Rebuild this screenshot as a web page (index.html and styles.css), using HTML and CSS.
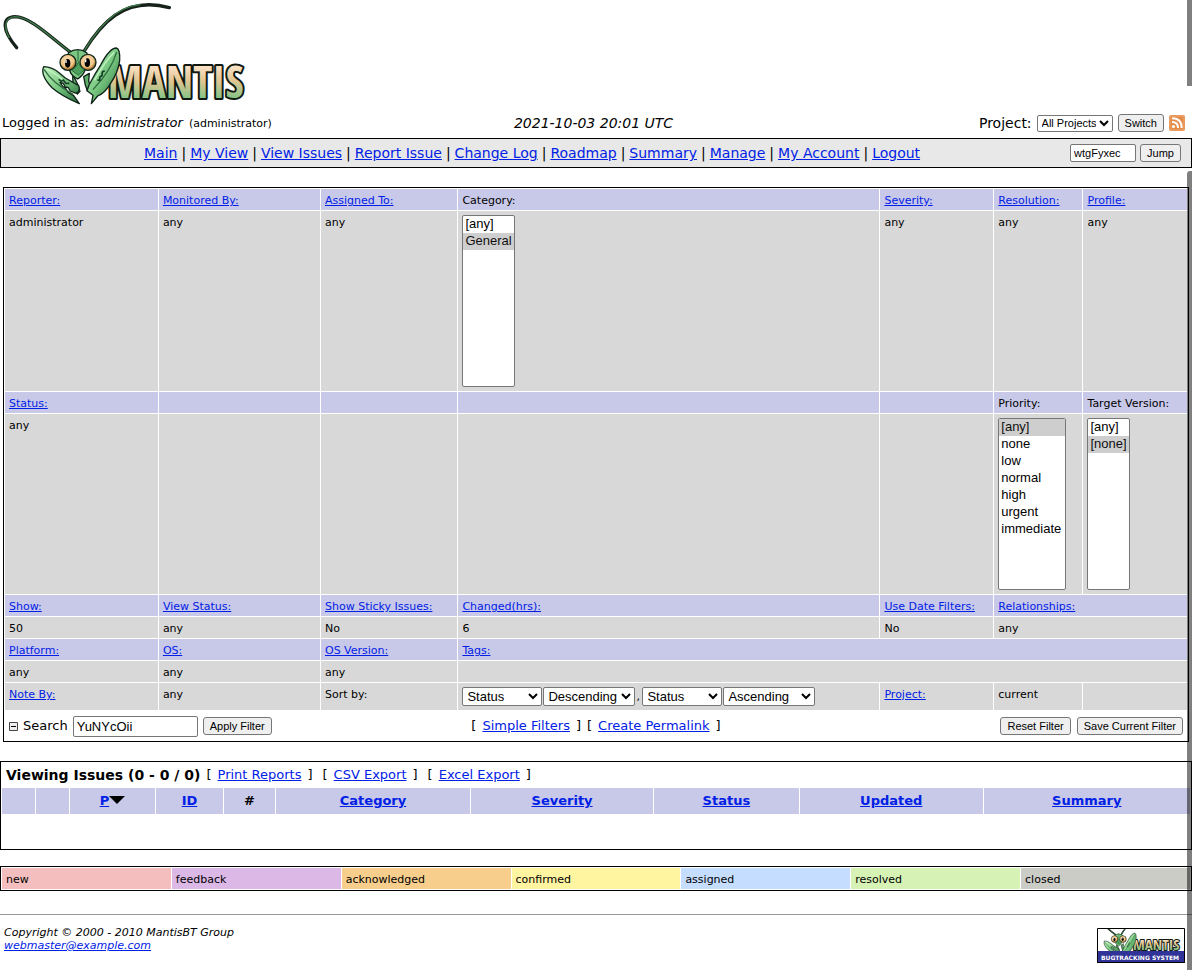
FILE: index.html
```html
<!DOCTYPE html>
<html lang="en">
<head>
<meta charset="utf-8">
<title>View Issues - MantisBT</title>
<link rel="stylesheet" href="styles.css">
</head>
<body>
<header>
<svg class="logo" viewBox="0 0 780 330" role="img" aria-label="Mantis">
  <defs>
    <linearGradient id="word" x1="0" y1="0" x2="0" y2="1"><stop offset="0.25" stop-color="#fbe3c8"/><stop offset="0.5" stop-color="#e2c592"/><stop offset="0.8" stop-color="#83c486"/></linearGradient>
    <linearGradient id="leaf" x1="0" y1="0" x2="1" y2="1"><stop offset="0" stop-color="#c4f5c2"/><stop offset="0.5" stop-color="#78c780"/><stop offset="1" stop-color="#23683a"/></linearGradient>
    <radialGradient id="eye" cx="0.45" cy="0.4"><stop offset="0" stop-color="#fae0b0"/><stop offset="0.8" stop-color="#efc488"/><stop offset="1" stop-color="#b9843e"/></radialGradient>
    <symbol id="mantis" viewBox="0 0 780 330">
      <g fill="none" stroke-linecap="round">
        <path d="M212 157C150 110 90 50 45 50C5 52 5 90 50 143" stroke="#152119" stroke-width="10"/>
        <path d="M212 157C150 110 90 50 45 50C15 52 10 80 27 112" stroke="#3f7b4b" stroke-width="4"/>
        <path d="M252 154C298 78 370 -15 508 23" stroke="#152119" stroke-width="10"/>
        <path d="M252 154C292 88 345 20 420 14" stroke="#3f7b4b" stroke-width="4"/>
      </g>
      <g stroke="#10251a" stroke-width="4" stroke-linejoin="round">
        <path d="M222 230L234 255L240 274L232 282L220 262L218 230ZM251 230L268 220L266 244L277 274L262 272L256 255Z" fill="#5fae69"/>
        <path d="M131 200Q157 201 178 219L196 234L236 257Q242 272 229 280L211 273L205 263L196 261L190 250L180 247L188 259L198 267L205 277L221 287L238 311Q185 288 156 263Q120 225 131 200Z" fill="url(#leaf)"/>
        <path d="M349 144Q361 147 359 182Q354 218 333 248Q316 279 293 288L274 311L279 286L261 272L267 255Q283 224 303 193Q329 144 349 144Z" fill="url(#leaf)"/>
        <path d="M205 159Q233 139 261 159L255 211Q250 226 233 237Q214 227 209 212Z" fill="#7cc782"/>
        <ellipse cx="204" cy="187" rx="24" ry="24" fill="url(#eye)"/>
        <ellipse cx="264" cy="187" rx="24" ry="24" fill="url(#eye)"/>
      </g>
      <path d="M132 208Q158 250 220 283M350 156Q335 209 279 269" fill="none" stroke="#326f40" stroke-width="4"/>
      <path d="M139 207Q170 221 204 253M343 157Q314 185 283 241" fill="none" stroke="#c4f5c2" stroke-width="4"/>
      <path d="M234 151V186M216 211Q230 201 235 187Q241 204 253 209L235 226Z" fill="#4f9f5c" stroke="#286b3b" stroke-width="3"/>
      <path d="M176 238L184 244L190 240L198 250L208 250M292 240L299 241L300 230L306 227L307 216L314 212" fill="none" stroke="#153c25" stroke-width="5"/>
      <ellipse cx="203" cy="190" rx="8" ry="13"/><ellipse cx="262" cy="188" rx="8" ry="13"/>
      <path d="M198 180v9M257 178v9" stroke="#fff" stroke-width="4"/>
    </symbol>
  </defs>
  <text class="wordmark" x="323" y="293">MANTIS</text>
  <use href="#mantis" width="780" height="330"/>
</svg>
<div class="login">
  <div class="who"><span>Logged in as:</span><i>administrator</i><small>(administrator)</small></div>
  <i>2021-10-03 20:01 UTC</i>
  <form class="switcher"><label for="project">Project:</label>
    <select id="project"><option>All Projects</option></select>
    <button type="button">Switch</button>
    <a class="rss" href="#" aria-label="RSS"><svg viewBox="0 0 16 16"><rect width="16" height="16" rx="2" fill="#e58b48"/><rect x="1" y="1" width="14" height="14" rx="1" fill="none" stroke="#efad78"/><circle cx="4.5" cy="11.5" r="1.6" fill="#fff"/><path d="M3 7Q9 7 9 13M3 3.3Q12.7 3.3 12.7 13" fill="none" stroke="#fff" stroke-width="2"/></svg></a>
  </form>
</div>
</header>
<div class="menubar">
  <nav><a href="#">Main</a><span>|</span><a href="#">My View</a><span>|</span><a href="#">View Issues</a><span>|</span><a href="#">Report Issue</a><span>|</span><a href="#">Change Log</a><span>|</span><a href="#">Roadmap</a><span>|</span><a href="#">Summary</a><span>|</span><a href="#">Manage</a><span>|</span><a href="#">My Account</a><span>|</span><a href="#">Logout</a></nav>
  <form><input class="jump" type="text" value="wtgFyxec" aria-label="Issue number"><button type="button">Jump</button></form>
</div>
<main>
<form class="filter">
<table>
<colgroup><col class="c1"><col class="c2"><col class="c3"><col class="c4"><col class="c5"><col class="c6"><col class="c7"></colgroup>
<tr class="head"><td><a href="#">Reporter:</a></td><td><a href="#">Monitored By:</a></td><td><a href="#">Assigned To:</a></td><td><label for="category">Category:</label></td><td><a href="#">Severity:</a></td><td><a href="#">Resolution:</a></td><td><a href="#">Profile:</a></td></tr>
<tr><td>administrator</td><td>any</td><td>any</td><td class="list"><select id="category" multiple size="10"><option>[any]</option><option selected>General</option></select></td><td>any</td><td>any</td><td>any</td></tr>
<tr class="head"><td><a href="#">Status:</a></td><td></td><td></td><td></td><td></td><td><label for="priority">Priority:</label></td><td><label for="target">Target Version:</label></td></tr>
<tr><td>any</td><td></td><td></td><td></td><td></td><td class="list"><select id="priority" multiple size="10"><option selected>[any]</option><option>none</option><option>low</option><option>normal</option><option>high</option><option>urgent</option><option>immediate</option></select></td><td class="list"><select id="target" multiple size="10"><option>[any]</option><option selected>[none]</option></select></td></tr>
<tr class="head"><td><a href="#">Show:</a></td><td><a href="#">View Status:</a></td><td><a href="#">Show Sticky Issues:</a></td><td><a href="#">Changed(hrs):</a></td><td><a href="#">Use Date Filters:</a></td><td colspan="2"><a href="#">Relationships:</a></td></tr>
<tr><td>50</td><td>any</td><td>No</td><td>6</td><td>No</td><td colspan="2">any</td></tr>
<tr class="head"><td><a href="#">Platform:</a></td><td><a href="#">OS:</a></td><td><a href="#">OS Version:</a></td><td colspan="4"><a href="#">Tags:</a></td></tr>
<tr><td>any</td><td>any</td><td>any</td><td colspan="4"></td></tr>
<tr><td><a href="#">Note By:</a></td><td>any</td><td>Sort by:</td><td class="list"><div class="sort"><select class="field" aria-label="First sort field"><option>Status</option></select><select class="dir" aria-label="First sort direction"><option>Descending</option></select><span>,</span><select class="field" aria-label="Second sort field"><option>Status</option></select><select class="dir" aria-label="Second sort direction"><option>Ascending</option></select></div></td><td><a href="#">Project:</a></td><td>current</td><td></td></tr>
</table>
<div class="actions">
  <div class="search"><svg class="collapse" viewBox="0 0 9 9"><path d="M.5 .5h8v8h-8z" fill="#eee" stroke="#444"/><path d="M2 4.5h5" stroke="#000"/></svg><label for="search">Search</label><input id="search" type="text" value="YuNYcOii"><button type="button">Apply Filter</button></div>
  <div class="links"><span>[</span><a href="#">Simple Filters</a><span>]</span><span>[</span><a href="#">Create Permalink</a><span>]</span></div>
  <div class="saves"><button type="button">Reset Filter</button><button type="button">Save Current Filter</button></div>
</div>
</form>
<section class="issues">
  <div class="title"><b>Viewing Issues (0 - 0 / 0)</b><span>[</span><a href="#">Print Reports</a><span>]</span><span class="open">[</span><a href="#">CSV Export</a><span>]</span><span class="open">[</span><a href="#">Excel Export</a><span>]</span></div>
  <table>
  <colgroup><col class="b1"><col class="b1"><col class="b2"><col class="b3"><col class="b4"><col class="b5"><col class="b6"><col class="b7"><col class="b8"><col class="b9"></colgroup>
  <tr><th></th><th></th><th><a href="#">P</a><svg class="arrow" viewBox="0 0 16 8"><path d="M0 0H16L8 8Z"/></svg></th><th><a href="#">ID</a></th><th>#</th><th><a href="#">Category</a></th><th><a href="#">Severity</a></th><th><a href="#">Status</a></th><th><a href="#">Updated</a></th><th><a href="#">Summary</a></th></tr>
  </table>
</section>
<table class="legend"><tr><td class="new">new</td><td class="feedback">feedback</td><td class="acknowledged">acknowledged</td><td class="confirmed">confirmed</td><td class="assigned">assigned</td><td class="resolved">resolved</td><td class="closed">closed</td></tr></table>
</main>
<footer>
  <address>Copyright © 2000 - 2010 MantisBT Group<br><a href="#">webmaster@example.com</a></address>
  <svg class="badge" viewBox="0 0 88 35" role="img" aria-label="Mantis bugtracking system"><path d="M0 0h88v35H0z" fill="#fff"/><text class="wordmark small" x="36" y="22">MANTIS</text><use href="#mantis" x="-11" y="-15" width="109" height="46"/><path d="M0 23h88v12H0z" fill="#303398"/><text class="tagline" x="43" y="32" text-anchor="middle">BUGTRACKING SYSTEM</text><path d="M.5 .5h87v34H.5z" fill="none" stroke="#000"/></svg>
</footer>
<div class="scroll"><i></i><i></i></div>
</body>
</html>
```
FILE: styles.css
```css
* { box-sizing: border-box; }
body { position: relative; margin: 0; min-height: 100vh; background: #fff; color: #000; font: 13px/18px Verdana, "DejaVu Sans", sans-serif; }
a { color: #0020e6; }
button, input, select { font-family: "Liberation Sans", Arial, sans-serif; margin: 0; color: #000; }
button { height: 18px; padding: 0 6px; font-size: 11px; line-height: 13px; border: 1px solid #767676; border-radius: 3px; background: #efefef; white-space: nowrap; }
input { border: 1px solid #767676; border-radius: 2px; background: #fff; }
select { border: 1px solid #767676; border-radius: 2px; background: #fff; font-size: 13px; }
.logo { display: block; width: 260px; height: 110px; }
.wordmark { font: bold 132px Impact, "Open Sans Condensed", "Roboto Condensed", "Liberation Sans", sans-serif; fill: url(#word); stroke: #101810; stroke-width: 12px; stroke-linejoin: round; paint-order: stroke; }
.wordmark.small { font-size: 15px; stroke-width: 2px; }
.tagline { font: bold 6px "DejaVu Sans", sans-serif; fill: #fff; }
.login { display: grid; grid-template-columns: 1fr auto 1fr; align-items: center; height: 28px; padding: 0 7px 2px 2px; font-size: 14px; }
.who { display: flex; align-items: baseline; gap: 6px; font-size: 13px; }
.login small { font-size: 11px; }
.switcher { display: flex; justify-content: flex-end; align-items: center; gap: 5px; }
.switcher select { width: 76px; height: 17px; font-size: 11px; }
.rss, .rss svg { display: block; width: 16px; height: 16px; }
.menubar { display: flex; align-items: center; height: 30px; border: 1px solid #000; background: #e8e8e8; padding-right: 10px; }
.menubar nav { flex: 1; display: flex; justify-content: center; gap: 4px; padding-right: 7px; font-size: 14px; white-space: nowrap; }
.menubar form { display: flex; gap: 4px; }
.jump { width: 66px; height: 18px; padding: 1px 3px; font-size: 11px; }
.filter { margin: 19px 3px 0; border: 1px solid #000; }
.filter table { width: 100%; table-layout: fixed; border-spacing: 1px; font-size: 11px; line-height: 13px; }
.filter td { height: 21px; padding: 5px 4px 3px; vertical-align: top; background: #d8d8d8; white-space: nowrap; }
.filter .head td { background: #c8c8e8; }
.filter td.list { padding: 4px; line-height: 0; }
.filter .list select { vertical-align: top; }
.c1 { width: 13%; } .c2 { width: 13.7%; } .c3 { width: 11.6%; } .c4 { width: 35.8%; } .c5 { width: 9.6%; } .c6 { width: 7.5%; } .c7 { width: 8.8%; }
select[multiple] { height: 172px; padding: 0; overflow: hidden; }
select[multiple] option { min-height: 17px; padding: 0 2px; line-height: 17px; }
#category { width: 53px; } #priority { width: 68px; } #target { width: 43px; }
.sort { display: flex; gap: 1px; line-height: 19px; }
.sort select { height: 19px; }
.sort span { width: 5px; }
.field { width: 80px; } .dir { width: 92px; }
.actions { display: grid; grid-template-columns: 1fr auto 1fr; align-items: center; min-height: 30px; padding: 0 5px; }
.search, .saves, .links, .title { display: flex; align-items: center; }
.search { gap: 5px; }
.collapse { width: 9px; height: 9px; }
#search { width: 125px; height: 21px; font-size: 13px; padding: 1px 3px; }
.saves { justify-content: flex-end; gap: 6px; }
.links, .title { gap: 6px; }
.issues { margin-top: 19px; min-height: 89px; border: 1px solid #000; }
.title { height: 25px; padding: 1px 5px 0; }
.title b { font-size: 14px; }
.title .open { padding-left: 4px; }
.issues table { width: 100%; table-layout: fixed; border-spacing: 1px; }
.issues th { height: 26px; padding: 0; background: #c8c8e8; }
.arrow { width: 16px; height: 8px; vertical-align: 1px; }
.b1 { width: 2.8%; } .b2 { width: 7.2%; } .b3 { width: 5.7%; } .b4 { width: 4.3%; } .b5 { width: 16.5%; } .b6 { width: 15.4%; } .b7 { width: 12.3%; } .b8 { width: 15.5%; } .b9 { width: 17.5%; }
.legend { width: 100%; margin-top: 16px; border: 1px solid #000; border-spacing: 1px; table-layout: fixed; font-size: 11px; line-height: 13px; }
.legend td { padding: 5px 4px 3px; }
.new { background: #f5bebe; } .feedback { background: #dcb8e6; } .acknowledged { background: #f8ce8c; } .confirmed { background: #fff4a0; } .assigned { background: #c5ddff; } .resolved { background: #d7f2b5; } .closed { background: #ccccc6; }
footer { display: flex; justify-content: space-between; margin-top: 23px; border-top: 1px solid #999; padding: 11px 7px 6px 4px; font-size: 11px; line-height: 13px; }
.badge { width: 88px; height: 35px; margin-top: 2px; }
.scroll { position: absolute; top: 0; right: 0; bottom: 0; width: 5px; display: flex; flex-direction: column; gap: 85px; pointer-events: none; }
.scroll i { height: 86px; background: rgba(0, 0, 0, 0.5); }
.scroll i:last-child { height: auto; flex: 1; border-top-left-radius: 3px; }
```
